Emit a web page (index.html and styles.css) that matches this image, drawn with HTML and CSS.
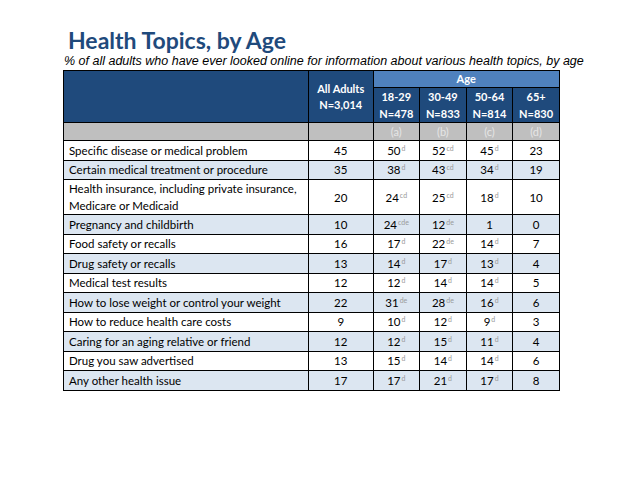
FILE: index.html
```html
<!DOCTYPE html>
<html>
<head>
<meta charset="utf-8">
<link rel="stylesheet" href="styles.css">
</head>
<body>
<div class="slide">
  <h1 class="title">Health Topics, by Age</h1>
  <p class="subtitle">% of all adults who have ever looked online for information about various health topics, by age</p>
  <table class="data">
    <colgroup>
      <col class="c-label"><col class="c-all"><col class="c-age"><col class="c-age"><col class="c-age"><col class="c-age">
    </colgroup>
    <thead>
      <tr class="h-band">
        <th rowspan="2" class="h-dark"></th>
        <th rowspan="2" class="h-dark">All Adults<br>N=3,014</th>
        <th colspan="4" class="h-age">Age</th>
      </tr>
      <tr class="h-groups">
        <th class="h-dark">18-29<br>N=478</th>
        <th class="h-dark">30-49<br>N=833</th>
        <th class="h-dark">50-64<br>N=814</th>
        <th class="h-dark">65+<br>N=830</th>
      </tr>
      <tr class="h-letters">
        <th></th><th></th><th>(a)</th><th>(b)</th><th>(c)</th><th>(d)</th>
      </tr>
    </thead>
    <tbody>
      <tr><td>Specific disease or medical problem</td><td>45</td><td>50<sup>d</sup></td><td>52<sup>cd</sup></td><td>45<sup>d</sup></td><td>23</td></tr>
      <tr class="alt"><td>Certain medical treatment or procedure</td><td>35</td><td>38<sup>d</sup></td><td>43<sup>cd</sup></td><td>34<sup>d</sup></td><td>19</td></tr>
      <tr class="tall"><td>Health insurance, including private insurance,<br>Medicare or Medicaid</td><td>20</td><td>24<sup>cd</sup></td><td>25<sup>cd</sup></td><td>18<sup>d</sup></td><td>10</td></tr>
      <tr class="alt"><td>Pregnancy and childbirth</td><td>10</td><td>24<sup>cde</sup></td><td>12<sup>de</sup></td><td>1</td><td>0</td></tr>
      <tr><td>Food safety or recalls</td><td>16</td><td>17<sup>d</sup></td><td>22<sup>de</sup></td><td>14<sup>d</sup></td><td>7</td></tr>
      <tr class="alt"><td>Drug safety or recalls</td><td>13</td><td>14<sup>d</sup></td><td>17<sup>d</sup></td><td>13<sup>d</sup></td><td>4</td></tr>
      <tr><td>Medical test results</td><td>12</td><td>12<sup>d</sup></td><td>14<sup>d</sup></td><td>14<sup>d</sup></td><td>5</td></tr>
      <tr class="alt"><td>How to lose weight or control your weight</td><td>22</td><td>31<sup>de</sup></td><td>28<sup>de</sup></td><td>16<sup>d</sup></td><td>6</td></tr>
      <tr><td>How to reduce health care costs</td><td>9</td><td>10<sup>d</sup></td><td>12<sup>d</sup></td><td>9<sup>d</sup></td><td>3</td></tr>
      <tr class="alt"><td>Caring for an aging relative or friend</td><td>12</td><td>12<sup>d</sup></td><td>15<sup>d</sup></td><td>11<sup>d</sup></td><td>4</td></tr>
      <tr><td>Drug you saw advertised</td><td>13</td><td>15<sup>d</sup></td><td>14<sup>d</sup></td><td>14<sup>d</sup></td><td>6</td></tr>
      <tr class="alt"><td>Any other health issue</td><td>17</td><td>17<sup>d</sup></td><td>21<sup>d</sup></td><td>17<sup>d</sup></td><td>8</td></tr>
    </tbody>
  </table>
</div>
</body>
</html>
```

FILE: styles.css
```css
html, body {
  margin: 0;
  padding: 0;
  background: #ffffff;
}

.slide {
  padding: 28px 0 0 63px;
  font-family: Lato, "Open Sans", sans-serif;
}

.title {
  margin: 0 0 0 5px;
  font-family: Lato, sans-serif;
  font-weight: 700;
  font-size: 23px;
  line-height: 24px;
  color: #1f4a7c;
}

.subtitle {
  margin: 2px 0 0 1px;
  font-family: "Liberation Sans", Arial, sans-serif;
  font-style: italic;
  font-size: 12.5px;
  line-height: 14px;
  color: #000000;
  white-space: nowrap;
}

.data {
  margin-top: 2px;
  border-collapse: collapse;
  table-layout: fixed;
  width: 496px;
  font-size: 11px;
  color: #000000;
}

.c-label { width: 245px; }
.c-all { width: 64.5px; }
.c-age { width: 46.6px; }

.data th,
.data td {
  border: 1px solid #000000;
  padding: 0;
  text-align: center;
  vertical-align: middle;
}

.data th {
  font-weight: 700;
  color: #ffffff;
}

.h-band th { height: 16px; line-height: 16px; }
.h-groups th { height: 33px; line-height: 17px; }

.h-dark {
  background: #1f4a7c;
  line-height: 17px;
}

.h-age {
  background: #4f81bd;
}

.h-letters th {
  background: #bfbfbf;
  color: #e6e6e6;
  font-weight: 400;
  height: 17px;
  line-height: 17px;
}

.data td {
  height: 18.5px;
  line-height: 17px;
  font-size: 11.5px;
}

.data td:first-child {
  text-align: left;
  padding-left: 5px;
}

.data tr.tall td {
  height: 34px;
}

.data tr.alt td {
  background: #dce6f1;
}

.data sup {
  font-size: 7px;
  line-height: 0;
  vertical-align: 4px;
  color: #9a9a9a;
  margin-left: 1px;
}
```
